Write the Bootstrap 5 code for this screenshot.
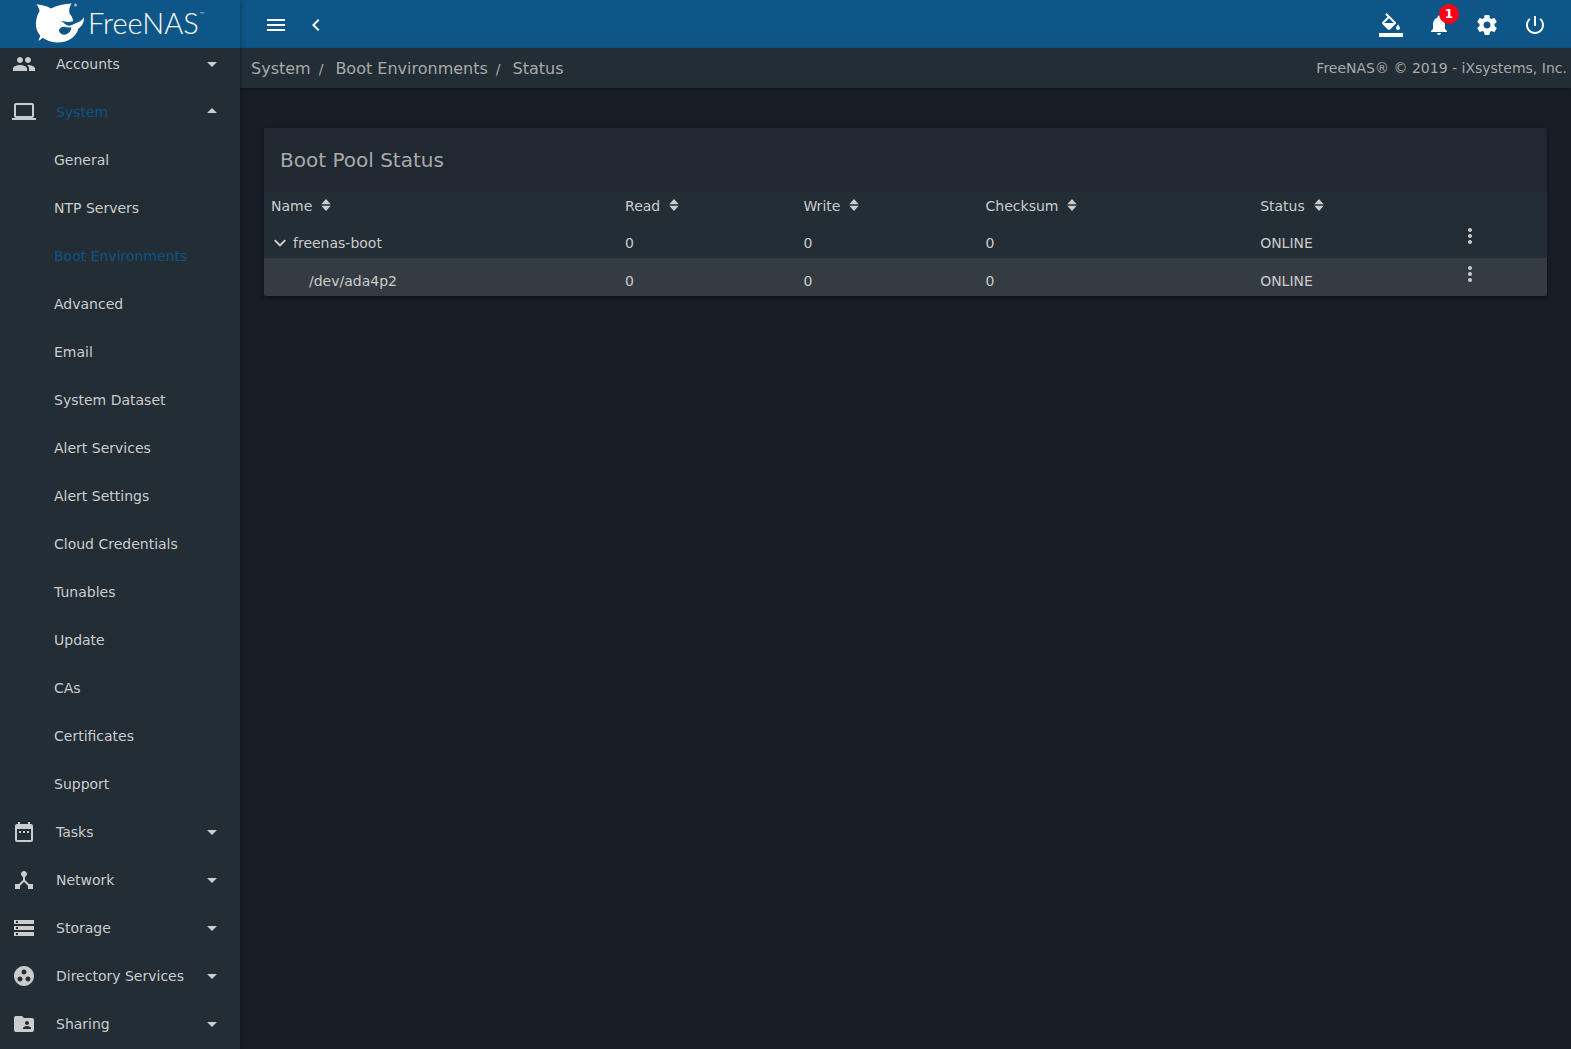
<!DOCTYPE html>
<html lang="en">
<head>
<meta charset="utf-8">
<meta name="viewport" content="width=device-width, initial-scale=1">
<title>FreeNAS - Boot Pool Status</title>
<link href="https://cdn.jsdelivr.net/npm/bootstrap@5.3.0/dist/css/bootstrap.min.css" rel="stylesheet">
<style>
:root { --primary: #0d5687; --bg1: #171e26; --bg2: #232d35; --fg1: #aaaaaa; --fg2: #cccccc; }
body { background: var(--bg1); color: var(--fg2); font-family: "DejaVu Sans", sans-serif; font-size: 14px; line-height: 20px; }
svg { fill: currentColor; display: block; flex: none; }
a { color: inherit; text-decoration: none; }
.side-panel { width: 240px; background: var(--bg2); box-shadow: 1px 0 4px rgba(0,0,0,.3); z-index: 2; }
.brand-bar { height: 48px; background: var(--primary); color: #fff; z-index: 1; }
.brand-word { font-family: Lato, sans-serif; font-weight: 300; }
.menu-list { margin-top: -8px; }
.menu-row { height: 48px; width: 100%; border: 0; background: none; color: inherit; text-align: left; }
.menu-top { padding: 0 16px 0 12px; }
.menu-sub { padding-left: 54px; }
.is-active { color: var(--primary); }
.top-bar { height: 48px; background: var(--primary); color: #fff; }
.tool-btn { width: 48px; height: 48px; padding: 1px 0 0; border: 0; background: none; color: #fff; display: flex; align-items: center; justify-content: center; position: relative; }
.tool-narrow { width: 40px; }
.alert-count { position: absolute; top: 4px; left: 24px; width: 20px; height: 20px; border-radius: 50%; background: #ff0016; font-size: 12px; font-weight: 700; line-height: 21px; }
.crumb-bar { height: 40px; background: var(--bg2); color: var(--fg1); box-shadow: 0 1px 3px rgba(0,0,0,.4); padding-left: 11px; padding-right: 4px; }
.crumbs { --bs-breadcrumb-divider-color: var(--fg1); --bs-breadcrumb-item-padding-x: 12px; font-size: 16px; padding-top: 1px; }
.crumbs .breadcrumb-item + .breadcrumb-item { padding-left: 8px; }
.crumbs .breadcrumb-item + .breadcrumb-item::before { font-size: 14px; }
.pool-card { margin: 40px 24px; border-radius: 2px; background: var(--bg2); box-shadow: 0 2px 4px rgba(0,0,0,.4); overflow: hidden; }
.pool-title { height: 64px; background: #202831; color: var(--fg1); font-size: 20px; line-height: 64px; padding: 0 16px; font-weight: 400; margin: 0; }
.pool-table { table-layout: fixed; width: 100%; }
.pool-table th, .pool-table td { padding: 0 7px; font-weight: 400; }
.pool-table th { height: 28px; }
.pool-table td { height: 38px; padding-top: 8px; }
.pool-table .cell-menu { padding: 0; vertical-align: top; }
.row-alt { background: #353b42; }
.bare-btn { border: 0; background: none; padding: 0; color: inherit; }
.sort-btn { display: flex; align-items: center; gap: 9px; }
.sort-btn svg { margin-bottom: 2px; }
.child-name { padding-left: 38px; }
.c-name { width: 27.6%; } .c-read { width: 13.9%; } .c-write { width: 14.2%; } .c-sum { width: 21.4%; } .c-status { width: 16%; }
</style>
<script src="https://cdn.jsdelivr.net/npm/bootstrap@5.3.0/dist/js/bootstrap.bundle.min.js"></script>
</head>
<body>
<svg class="d-none" aria-hidden="true">
  <symbol id="down" viewBox="0 0 24 24"><path d="M7 10l5 5 5-5z"/></symbol>
  <symbol id="up" viewBox="0 0 24 24"><path d="M7 13l5-5 5 5z"/></symbol>
  <symbol id="sort" viewBox="0 0 10 12"><path d="M5 0l4.700 5.200H.300zM5 12L.300 6.800h9.400z"/></symbol>
  <symbol id="dots" viewBox="0 0 24 24"><path d="M12 8c1.100 0 2-.9 2-2s-.9-2-2-2-2 .9-2 2 .9 2 2 2zm0 2c-1.100 0-2 .9-2 2s.9 2 2 2 2-.9 2-2-.9-2-2-2zm0 6c-1.100 0-2 .9-2 2s.9 2 2 2 2-.9 2-2-.9-2-2-2z"/></symbol>
</svg>
<div class="d-flex vh-100 overflow-hidden">
  <aside class="side-panel d-flex flex-column flex-shrink-0 position-relative overflow-hidden">
    <a href="#" class="brand-bar d-block flex-shrink-0 position-relative" aria-label="FreeNAS">
      <svg width="240" height="48" viewBox="0 0 240 48">
        <path fill-rule="evenodd" d="M36.300 4C40 5.200 46 5.300 51 8.500C57 5.500 64 3.600 71.500 3.500C69.300 7 68.600 10.500 69.800 14C71.800 16 72.800 18.500 73.200 21.200C69.500 22.300 65.500 22.200 60.300 20.800C63 22.300 64.800 23.600 66.500 25C69.500 26.500 72 25.300 74.500 23.800C79 22.300 82 20.300 84 17.200C84.300 22 82 26 78.500 28.500C76.500 36.500 68 42.800 57 42.600C51 42.400 46 40.300 42.800 37.800C41.500 39 40 40 38.300 41C39 39 39.800 37.500 40.300 35.500C36.500 31.500 35 25.500 36.500 19C37 16 38 13.500 39.500 11.500C39.300 8.500 38 6 36.300 4ZM64.500 26.700C62 26.300 59.500 27.500 58.800 30.500C59.800 33.800 63 35.500 66.500 34.300C69.500 33 71.300 30.500 71.300 27.300C69 27.500 66.500 27.600 64.500 26.700Z"/>
        <circle cx="75.500" cy="5" r="1.500" opacity=".6"/>
        <text class="brand-word" x="88" y="34" font-size="29">FreeNAS</text>
        <text class="brand-word" x="200" y="16" font-size="6">™</text>
      </svg>
    </a>
    <nav class="menu-list" aria-label="Main">
      <button class="menu-row menu-top d-flex align-items-center"><svg width="24" height="24" viewBox="0 0 24 24"><path d="M16 11c1.660 0 2.990-1.340 2.990-3S17.660 5 16 5c-1.660 0-3 1.340-3 3s1.340 3 3 3zm-8 0c1.660 0 2.990-1.340 2.990-3S9.660 5 8 5C6.340 5 5 6.340 5 8s1.340 3 3 3zm0 2c-2.330 0-7 1.170-7 3.500V19h14v-2.500c0-2.330-4.670-3.500-7-3.500zm8 0c-.29 0-.62.020-.97.050 1.160.84 1.970 1.970 1.970 3.450V19h6v-2.500c0-2.330-4.670-3.500-7-3.500z"/></svg><span class="flex-grow-1 ps-3 ms-1">Accounts</span><svg width="24" height="24"><use href="#down"/></svg></button>
      <button class="menu-row menu-top d-flex align-items-center"><svg width="24" height="24" viewBox="0 0 24 24"><path d="M20 18c1.100 0 1.990-.9 1.990-2L22 5c0-1.100-.9-2-2-2H4c-1.100 0-2 .9-2 2v11c0 1.100.9 2 2 2H0v2h24v-2h-4zM4 5h16v11H4V5z"/></svg><span class="is-active flex-grow-1 ps-3 ms-1">System</span><svg width="24" height="24"><use href="#up"/></svg></button>
      <a href="#" class="menu-row menu-sub d-flex align-items-center">General</a>
      <a href="#" class="menu-row menu-sub d-flex align-items-center">NTP Servers</a>
      <a href="#" class="menu-row menu-sub is-active d-flex align-items-center">Boot Environments</a>
      <a href="#" class="menu-row menu-sub d-flex align-items-center">Advanced</a>
      <a href="#" class="menu-row menu-sub d-flex align-items-center">Email</a>
      <a href="#" class="menu-row menu-sub d-flex align-items-center">System Dataset</a>
      <a href="#" class="menu-row menu-sub d-flex align-items-center">Alert Services</a>
      <a href="#" class="menu-row menu-sub d-flex align-items-center">Alert Settings</a>
      <a href="#" class="menu-row menu-sub d-flex align-items-center">Cloud Credentials</a>
      <a href="#" class="menu-row menu-sub d-flex align-items-center">Tunables</a>
      <a href="#" class="menu-row menu-sub d-flex align-items-center">Update</a>
      <a href="#" class="menu-row menu-sub d-flex align-items-center">CAs</a>
      <a href="#" class="menu-row menu-sub d-flex align-items-center">Certificates</a>
      <a href="#" class="menu-row menu-sub d-flex align-items-center">Support</a>
      <button class="menu-row menu-top d-flex align-items-center"><svg width="24" height="24" viewBox="0 0 24 24"><path d="M9 11H7v2h2v-2zm4 0h-2v2h2v-2zm4 0h-2v2h2v-2zm2-7h-1V2h-2v2H8V2H6v2H5c-1.110 0-1.990.9-1.990 2L3 20c0 1.100.89 2 2 2h14c1.100 0 2-.9 2-2V6c0-1.100-.9-2-2-2zm0 16H5V9h14v11z"/></svg><span class="flex-grow-1 ps-3 ms-1">Tasks</span><svg width="24" height="24"><use href="#down"/></svg></button>
      <button class="menu-row menu-top d-flex align-items-center"><svg width="24" height="24" viewBox="0 0 24 24"><path d="M17 16l-4-4V8.820C14.160 8.400 15 7.300 15 6c0-1.660-1.340-3-3-3S9 4.340 9 6c0 1.300.84 2.400 2 2.820V12l-4 4H3v5h5v-3.050l4-4.200 4 4.200V21h5v-5h-4z"/></svg><span class="flex-grow-1 ps-3 ms-1">Network</span><svg width="24" height="24"><use href="#down"/></svg></button>
      <button class="menu-row menu-top d-flex align-items-center"><svg width="24" height="24" viewBox="0 0 24 24"><path d="M2 20h20v-4H2v4zm2-3h2v2H4v-2zM2 4v4h20V4H2zm4 3H4V5h2v2zm-4 7h20v-4H2v4zm2-3h2v2H4v-2z"/></svg><span class="flex-grow-1 ps-3 ms-1">Storage</span><svg width="24" height="24"><use href="#down"/></svg></button>
      <button class="menu-row menu-top d-flex align-items-center"><svg width="24" height="24" viewBox="0 0 24 24"><path d="M12 2C6.480 2 2 6.480 2 12s4.480 10 10 10 10-4.480 10-10S17.520 2 12 2zM8 17.500c-1.380 0-2.500-1.120-2.500-2.500s1.120-2.500 2.500-2.500 2.500 1.120 2.500 2.500-1.120 2.500-2.500 2.500zM9.500 8c0-1.380 1.120-2.500 2.500-2.500s2.500 1.120 2.500 2.500-1.120 2.500-2.500 2.500S9.500 9.380 9.500 8zm6.500 9.500c-1.380 0-2.500-1.120-2.500-2.500s1.120-2.500 2.500-2.500 2.500 1.120 2.500 2.500-1.120 2.500-2.500 2.500z"/></svg><span class="flex-grow-1 ps-3 ms-1">Directory Services</span><svg width="24" height="24"><use href="#down"/></svg></button>
      <button class="menu-row menu-top d-flex align-items-center"><svg width="24" height="24" viewBox="0 0 24 24"><path d="M20 6h-8l-2-2H4c-1.100 0-1.990.9-1.990 2L2 18c0 1.100.9 2 2 2h16c1.100 0 2-.9 2-2V8c0-1.100-.9-2-2-2zm-5 3c1.100 0 2 .9 2 2s-.9 2-2 2-2-.9-2-2 .9-2 2-2zm4 8h-8v-1c0-1.330 2.670-2 4-2s4 .67 4 2v1z"/></svg><span class="flex-grow-1 ps-3 ms-1">Sharing</span><svg width="24" height="24"><use href="#down"/></svg></button>
    </nav>
  </aside>
  <div class="flex-grow-1 d-flex flex-column">
    <header class="top-bar d-flex justify-content-between ps-3 pe-2">
      <div class="d-flex">
        <button class="tool-btn tool-narrow" aria-label="Toggle menu"><svg width="24" height="24" viewBox="0 0 24 24"><path d="M3 18h18v-2H3v2zm0-5h18v-2H3v2zm0-7v2h18V6H3z"/></svg></button>
        <button class="tool-btn tool-narrow" aria-label="Collapse menu"><svg width="24" height="24" viewBox="0 0 24 24"><path d="M15.410 7.410L14 6l-6 6 6 6 1.410-1.410L10.830 12z"/></svg></button>
      </div>
      <div class="d-flex me-1">
        <button class="tool-btn" aria-label="Theme"><svg width="24" height="24" viewBox="0 0 24 24"><path d="M16.560 8.940L7.620 0 6.210 1.410l2.380 2.380-5.150 5.150c-.59.590-.59 1.540 0 2.120l5.500 5.500c.29.290.68.440 1.060.440s.77-.15 1.060-.44l5.500-5.500c.59-.58.59-1.530 0-2.120zM5.210 10L10 5.210 14.790 10H5.210zM19 11.500s-2 2.170-2 3.500c0 1.100.9 2 2 2s2-.9 2-2c0-1.330-2-3.500-2-3.500zM0 20h24v4H0z"/></svg></button>
        <button class="tool-btn" aria-label="Alerts"><svg width="24" height="24" viewBox="0 0 24 24"><path d="M12 22c1.100 0 2-.9 2-2h-4c0 1.100.89 2 2 2zm6-6v-5c0-3.070-1.640-5.640-4.500-6.320V4c0-.83-.67-1.500-1.500-1.500s-1.500.67-1.500 1.500v.68C7.630 5.360 6 7.920 6 11v5l-2 2v1h16v-1l-2-2z"/></svg><span class="alert-count">1</span></button>
        <button class="tool-btn" aria-label="Settings"><svg width="24" height="24" viewBox="0 0 24 24"><path d="M19.430 12.980c.04-.32.070-.64.070-.98s-.03-.66-.07-.98l2.110-1.650c.19-.15.240-.42.120-.64l-2-3.460c-.12-.22-.39-.3-.61-.22l-2.490 1c-.52-.4-1.080-.73-1.690-.98l-.38-2.650C14.460 2.180 14.250 2 14 2h-4c-.25 0-.46.180-.49.420l-.38 2.650c-.61.250-1.170.590-1.690.98l-2.490-1c-.23-.09-.49 0-.61.220l-2 3.460c-.13.220-.07.490.12.640l2.110 1.650c-.04.320-.07.650-.07.980s.03.660.07.980l-2.110 1.650c-.19.150-.24.420-.12.640l2 3.460c.12.220.39.300.61.220l2.490-1c.52.400 1.080.730 1.690.980l.38 2.650c.03.240.24.420.49.420h4c.25 0 .46-.18.490-.42l.38-2.650c.61-.25 1.170-.59 1.690-.98l2.490 1c.23.090.49 0 .61-.22l2-3.460c.12-.22.070-.49-.12-.64l-2.110-1.650zM12 15.500c-1.930 0-3.500-1.570-3.500-3.500s1.570-3.500 3.500-3.500 3.500 1.570 3.500 3.500-1.570 3.500-3.500 3.500z"/></svg></button>
        <button class="tool-btn" aria-label="Power"><svg width="24" height="24" viewBox="0 0 24 24"><path d="M13 3h-2v10h2V3zm4.830 2.170l-1.420 1.420C17.990 7.860 19 9.810 19 12c0 3.870-3.130 7-7 7s-7-3.130-7-7c0-2.190 1.010-4.140 2.580-5.420L6.170 5.170C4.230 6.820 3 9.260 3 12c0 4.970 4.030 9 9 9s9-4.030 9-9c0-2.740-1.230-5.180-3.170-6.830z"/></svg></button>
      </div>
    </header>
    <div class="crumb-bar d-flex align-items-center justify-content-between">
      <nav aria-label="breadcrumb"><ol class="breadcrumb crumbs mb-0">
        <li class="breadcrumb-item"><a href="#">System</a></li>
        <li class="breadcrumb-item"><a href="#">Boot Environments</a></li>
        <li class="breadcrumb-item"><a href="#">Status</a></li>
      </ol></nav>
      <span>FreeNAS® © 2019 - iXsystems, Inc.</span>
    </div>
    <main>
      <section class="pool-card">
        <h1 class="pool-title">Boot Pool Status</h1>
        <table class="pool-table">
          <colgroup><col class="c-name"><col class="c-read"><col class="c-write"><col class="c-sum"><col class="c-status"><col></colgroup>
          <thead><tr>
            <th><button class="bare-btn sort-btn">Name <svg width="10" height="12"><use href="#sort"/></svg></button></th>
            <th><button class="bare-btn sort-btn">Read <svg width="10" height="12"><use href="#sort"/></svg></button></th>
            <th><button class="bare-btn sort-btn">Write <svg width="10" height="12"><use href="#sort"/></svg></button></th>
            <th><button class="bare-btn sort-btn">Checksum <svg width="10" height="12"><use href="#sort"/></svg></button></th>
            <th><button class="bare-btn sort-btn">Status <svg width="10" height="12"><use href="#sort"/></svg></button></th>
            <th></th>
          </tr></thead>
          <tbody>
            <tr><td><button class="bare-btn d-flex align-items-center gap-1"><svg width="18" height="18" viewBox="0 0 24 24"><path d="M5.900 7.200L12 13.300l6.100-6.100L20 9.100l-8 8-8-8z"/></svg>freenas-boot</button></td><td>0</td><td>0</td><td>0</td><td>ONLINE</td><td class="cell-menu"><button class="bare-btn" aria-label="Options for freenas-boot"><svg width="24" height="32" viewBox="0 0 24 24"><use href="#dots"/></svg></button></td></tr>
            <tr class="row-alt"><td><div class="child-name">/dev/ada4p2</div></td><td>0</td><td>0</td><td>0</td><td>ONLINE</td><td class="cell-menu"><button class="bare-btn" aria-label="Options for /dev/ada4p2"><svg width="24" height="32" viewBox="0 0 24 24"><use href="#dots"/></svg></button></td></tr>
          </tbody>
        </table>
      </section>
    </main>
  </div>
</div>
</body>
</html>
